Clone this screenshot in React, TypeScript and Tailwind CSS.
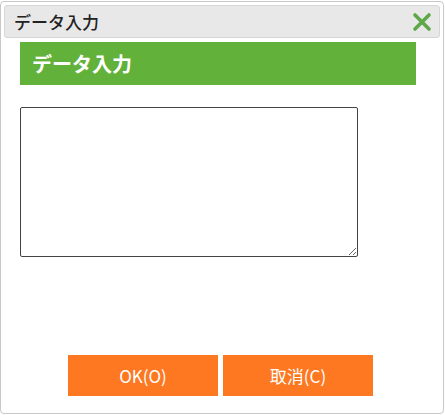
import React from 'react';

const font = { fontFamily: '"Noto Sans CJK JP", "Noto Sans", sans-serif' };

const App = () => {
  return (
    <div className="w-[445px] h-[415px] bg-white pt-px" style={font}>
      {/* dialog */}
      <div className="w-[444px] h-[413px] border border-[#c8c8c8] rounded-[4px] bg-white p-[3px] flex flex-col">
        {/* title bar */}
        <div className="h-[33px] flex items-center justify-between bg-[#e8e8e8] border border-[#d6d6d6] rounded-[3px] pl-[9px] pr-[7px]">
          <span className="text-[17px] font-medium text-[#222] leading-none">データ入力</span>
          <svg width="20" height="20" viewBox="0 0 20 20" className="text-[#5ea84a]">
            <path d="M3 3 L17 17 M17 3 L3 17" stroke="currentColor" strokeWidth="3.6" strokeLinecap="round" />
          </svg>
        </div>

        {/* body */}
        <div className="flex flex-col pl-[16px]">
          <div className="mt-[4px] w-[396px] h-[43px] bg-[#62b13a] flex items-center pl-[12px]">
            <span className="text-[20px] font-bold text-white">データ入力</span>
          </div>

          <textarea className="mt-[22px] w-[338px] h-[150px] border border-[#444] rounded-[2px] bg-white outline-none" />
        </div>

        <div className="mt-auto mb-[14px] flex gap-[5px] pl-[64px]">
          <button type="button" className="w-[150px] h-[41px] bg-[#fd7820] text-white text-[17px]">OK(O)</button>
          <button type="button" className="w-[150px] h-[41px] bg-[#fd7820] text-white text-[17px]">取消(C)</button>
        </div>
      </div>
    </div>
  );
};

export default App;
